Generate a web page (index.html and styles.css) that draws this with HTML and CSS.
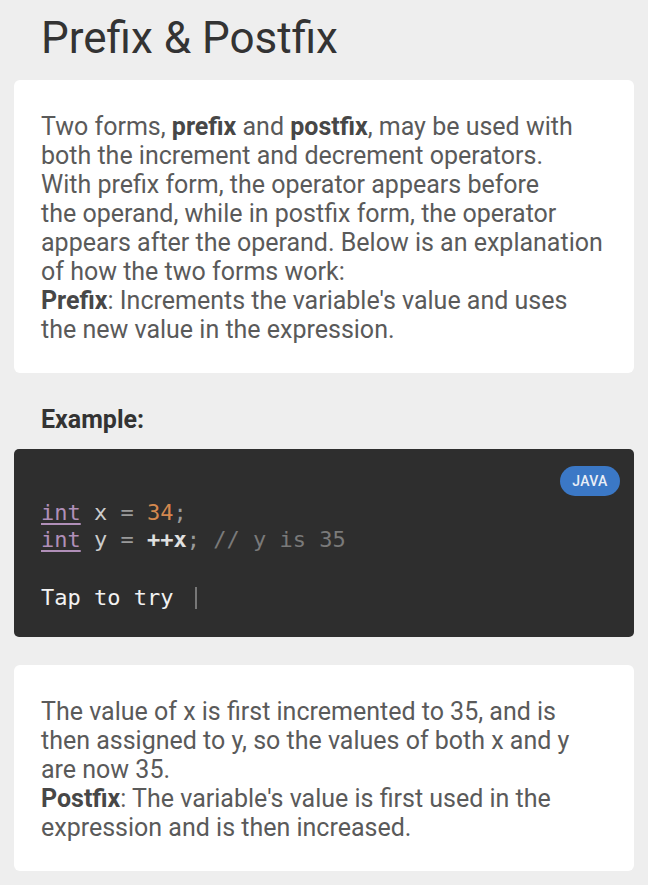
FILE: index.html
```html
<!DOCTYPE html>
<html lang="en">
<head>
<meta charset="utf-8">
<title>Prefix &amp; Postfix</title>
<link rel="stylesheet" href="styles.css">
</head>
<body>
<main class="page">
  <h1 class="title">Prefix &amp; Postfix</h1>

  <section class="card">
    <p class="text">Two forms, <b>prefix</b> and <b>postfix</b>, may be used with both the increment and decrement operators.<br>With prefix form, the operator appears before<br>the operand, while in postfix form, the operator appears after the operand. Below is an explanation of how the two forms work:<br><b>Prefix</b>: Increments the variable's value and uses the new value in the expression.</p>
  </section>

  <h2 class="subtitle">Example:</h2>

  <section class="code-block">
    <div class="code-head"><span class="badge">JAVA</span></div>
    <pre class="code"><span class="kw">int</span> x <span class="op">=</span> <span class="num">34</span><span class="op">;</span>
<span class="kw">int</span> y <span class="op">=</span> <b class="hl">++x</b><span class="op">;</span> <span class="cm">// y is 35</span></pre>
    <div class="try">Tap to try <span class="caret"></span></div>
  </section>

  <section class="card">
    <p class="text">The value of x is first incremented to 35, and is then assigned to y, so the values of both x and y are now 35.<br><b>Postfix</b>: The variable's value is first used in the expression and is then increased.</p>
  </section>
</main>
</body>
</html>
```

FILE: styles.css
```css
* { box-sizing: border-box; }

html, body {
  margin: 0;
  padding: 0;
  background: #eeeeee;
}

body {
  font-family: Roboto, "Noto Sans", "Liberation Sans", sans-serif;
  color: #565656;
}

.page {
  padding: 0 14px 14px;
  display: flex;
  flex-direction: column;
}

.title {
  margin: 11px 0 15px 27px;
  font-size: 44px;
  line-height: 54px;
  font-weight: 400;
  color: #333333;
}

.card {
  background: #ffffff;
  border-radius: 6px;
  padding: 32px 27px 29px;
}

.text {
  margin: 0;
  font-size: 25px;
  line-height: 29px;
  color: #5a5a5a;
}

.text b {
  font-weight: 700;
  color: #474747;
}

.subtitle {
  margin: 32px 0 15px 27px;
  font-size: 25px;
  line-height: 29px;
  font-weight: 700;
  color: #333333;
}

.code-block {
  background: #2e2e2e;
  border-radius: 5px;
  padding: 17px 14px 26px 27px;
  margin-bottom: 28px;
}

.code-head {
  display: flex;
  justify-content: flex-end;
  height: 33px;
}

.badge {
  display: inline-flex;
  align-items: center;
  justify-content: center;
  width: 60px;
  height: 30px;
  border-radius: 15px;
  background: #3b78c6;
  color: #e9eef7;
  font-family: Roboto, "Liberation Sans", sans-serif;
  font-size: 14px;
  font-weight: 500;
  letter-spacing: 0.3px;
}

.code {
  margin: 0;
  font-family: "DejaVu Sans Mono", "Liberation Mono", monospace;
  font-size: 22px;
  line-height: 27px;
  color: #cccccc;
}

.kw {
  color: #b08fb8;
  text-decoration: underline;
  text-underline-offset: 3px;
}

.op { color: #9a9a9a; }
.num { color: #d4884f; }
.hl { color: #e0e0e0; font-weight: 700; }
.cm { color: #7a7a7a; }

.try {
  margin-top: 31px;
  font-family: "DejaVu Sans Mono", "Liberation Mono", monospace;
  font-size: 22px;
  line-height: 27px;
  color: #f2f2f2;
  display: flex;
  align-items: center;
}

.caret {
  display: inline-block;
  width: 2px;
  height: 22px;
  margin-left: 22px;
  background: #777777;
}
```
